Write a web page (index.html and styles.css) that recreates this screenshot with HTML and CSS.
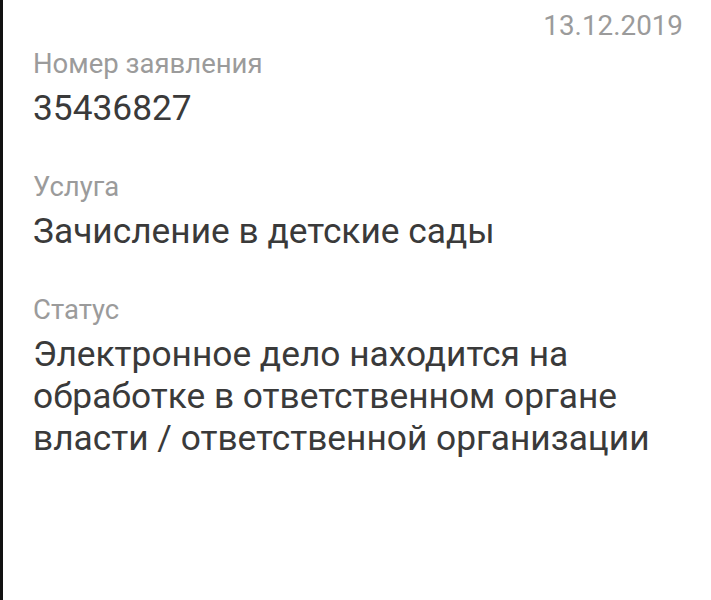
FILE: index.html
```html
<!DOCTYPE html>
<html lang="ru">
<head>
<meta charset="utf-8">
<link rel="stylesheet" href="styles.css">
</head>
<body>
<div class="screen">
  <div class="date">13.12.2019</div>
  <div class="field">
    <div class="label">Номер заявления</div>
    <div class="value">35436827</div>
  </div>
  <div class="field">
    <div class="label">Услуга</div>
    <div class="value">Зачисление в детские сады</div>
  </div>
  <div class="field">
    <div class="label">Статус</div>
    <div class="value">Электронное дело находится на обработке в ответственном органе власти / ответственной организации</div>
  </div>
</div>
</body>
</html>
```
FILE: styles.css
```css
html, body {
  margin: 0;
  padding: 0;
  background: #ffffff;
}
.screen {
  box-sizing: border-box;
  height: 600px;
  border-left: 3px solid #121212;
  padding: 11px 28px 0 30px;
  font-family: Roboto, "Noto Sans", sans-serif;
  background: #ffffff;
}
.date {
  text-align: right;
  font-size: 27.8px;
  line-height: 30px;
  color: #9b9b9b;
}
.field {
  margin-top: 6px;
}
.field + .field {
  margin-top: 41px;
}
.label {
  font-size: 27.5px;
  line-height: 34px;
  color: #9b9b9b;
}
.value {
  margin-top: 6px;
  font-size: 35.3px;
  line-height: 42px;
  color: #3a3a3a;
}
```
